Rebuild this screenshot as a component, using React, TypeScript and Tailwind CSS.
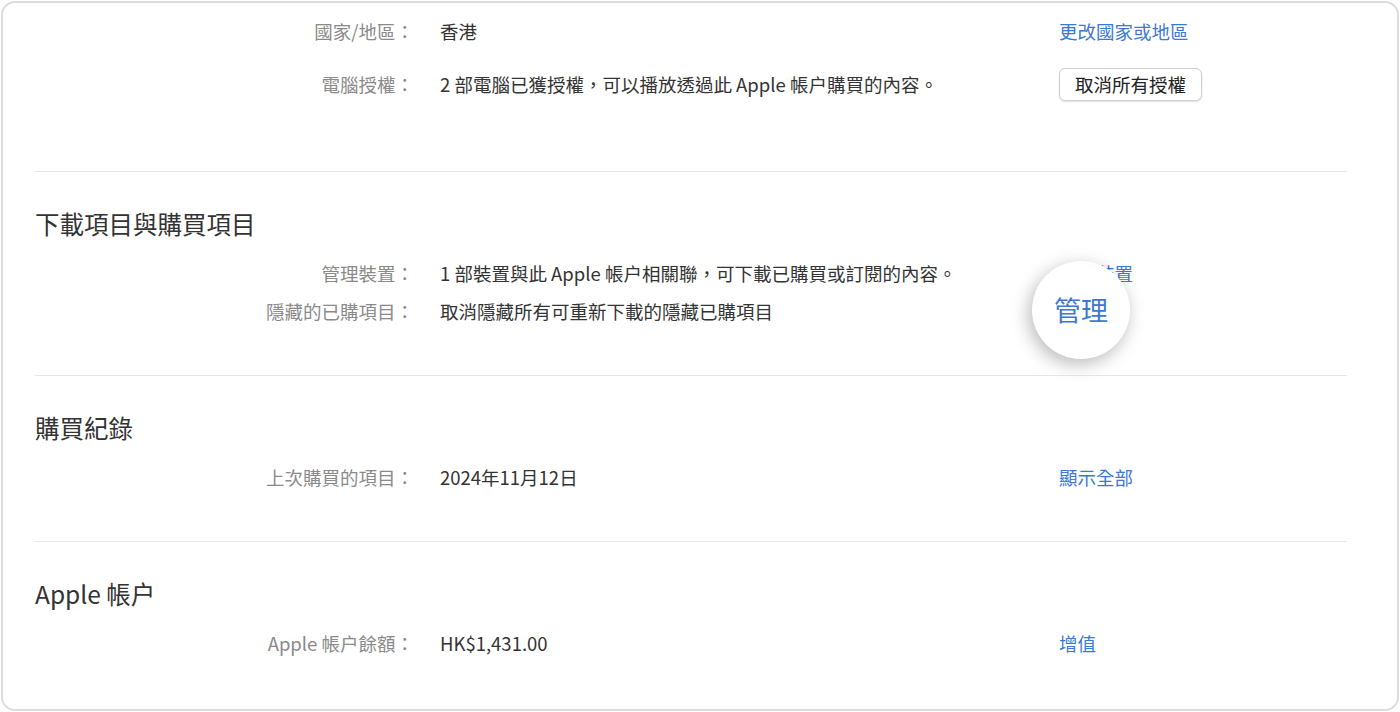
import React from 'react';

const font = { fontFamily: "'Noto Sans CJK TC', 'Noto Sans', sans-serif" };

type Row = {
  label: string;
  value: string;
  action?: string;
  button?: string;
};

function InfoRow({ label, value, action, button }: Row) {
  return (
    <div className={`flex items-center ${button ? 'h-[33px]' : 'h-[28px]'}`}>
      <div className="w-[379px] shrink-0 text-right text-[#8a8a8a]">{label}</div>
      <div className="ml-[26px] w-[619px] shrink-0 text-[#333]">{value}</div>
      {action && <a className="text-[#3c78d2] cursor-pointer">{action}</a>}
      {button && (
        <button className="h-[33px] px-[15px] rounded-[6px] border border-[#cfcfcf] bg-white text-[#222] shadow-[0_1px_2px_rgba(0,0,0,0.12)]">
          {button}
        </button>
      )}
    </div>
  );
}

function Section({ title, children, last }: { title: string; children: React.ReactNode; last?: boolean }) {
  return (
    <section className={`pt-[36px] ${last ? 'pb-[44px]' : 'pb-[49px] border-b border-[#e6e6e6]'}`}>
      <h2 className="h-[32px] flex items-center text-[24.5px] text-[#333] font-normal mb-[20px]">{title}</h2>
      <div className="flex flex-col gap-[10px]">{children}</div>
    </section>
  );
}

export default function App() {
  return (
    <div className="relative w-[1400px] h-[712px] bg-white p-px text-[18.5px]" style={font}>
      <div className="h-full rounded-[14px] border-2 border-[#dddddd] pl-[32px] pr-[50px]">
        {/* account summary */}
        <section className="pt-[15px] pb-[70px] border-b border-[#e6e6e6]">
          <div className="flex flex-col gap-[22px]">
            <InfoRow label="國家/地區：" value="香港" action="更改國家或地區" />
            <InfoRow
              label="電腦授權："
              value="2 部電腦已獲授權，可以播放透過此 Apple 帳户購買的內容。"
              button="取消所有授權"
            />
          </div>
        </section>

        <Section title="下載項目與購買項目">
          <InfoRow label="管理裝置：" value="1 部裝置與此 Apple 帳户相關聯，可下載已購買或訂閱的內容。" action="管理裝置" />
          <InfoRow label="隱藏的已購項目：" value="取消隱藏所有可重新下載的隱藏已購項目" />
        </Section>

        <Section title="購買紀錄">
          <InfoRow label="上次購買的項目：" value="2024年11月12日" action="顯示全部" />
        </Section>

        <Section title="Apple 帳户" last>
          <InfoRow label="Apple 帳户餘額：" value="HK$1,431.00" action="增值" />
        </Section>
      </div>

      {/* magnifier callout */}
      <div className="absolute left-[1032px] top-[261px] w-[98px] h-[98px] rounded-full bg-white flex items-center justify-center shadow-[-3px_5px_18px_rgba(0,0,0,0.28)]">
        <span className="text-[27px] text-[#3c78d2]">管理</span>
      </div>
    </div>
  );
}
